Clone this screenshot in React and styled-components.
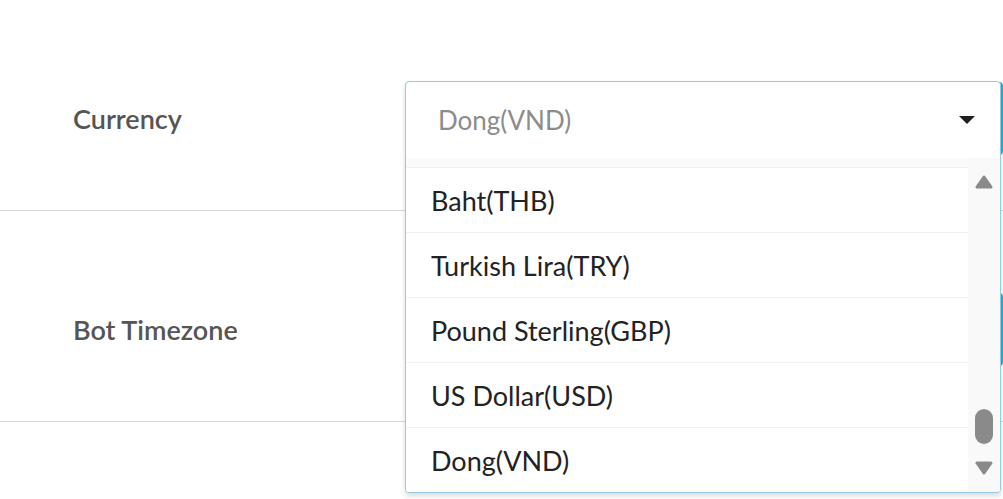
import styled, { createGlobalStyle } from "styled-components";

const GlobalStyle = createGlobalStyle`
  html {
    overflow: hidden;
  }
  body {
    margin: 0;
    padding: 0;
    background: #fff;
    font-family: "Source Sans Pro", Lato, "Open Sans", sans-serif;
  }
`;

const Page = styled.div`
  width: 100%;
  height: 499px;
`;

const Row = styled.div`
  display: grid;
  grid-template-columns: 405px 1fr;
  align-items: center;
  height: 211px;
  box-sizing: border-box;
  padding-top: 27px;
  border-bottom: 1px solid #d6d6d6;
`;

const Label = styled.div`
  padding-left: 73px;
  font-size: 27px;
  font-weight: 600;
  color: #555;
`;

const Field = styled.div`
  position: relative;
  height: 73px;
  border: 2px solid #12b3e3;
  border-radius: 4px;
  box-sizing: border-box;
`;

const Dropdown = styled.div`
  position: absolute;
  z-index: 2;
  top: -3px;
  left: -2px;
  right: 0;
  height: 412px;
  box-sizing: border-box;
  display: flex;
  flex-direction: column;
  background: #fff;
  border: 1px solid #92cadf;
  border-radius: 4px;
  box-shadow: 0 3px 5px rgba(0, 0, 0, 0.14);
  overflow: hidden;
`;

const Header = styled.div`
  flex: none;
  height: 76px;
  display: flex;
  align-items: center;
  justify-content: space-between;
  padding: 0 25px 0 32px;
  font-size: 26px;
  color: #8c8c8c;
`;

const Caret = styled.span`
  width: 0;
  height: 0;
  border-left: 8px solid transparent;
  border-right: 8px solid transparent;
  border-top: 8px solid #1f1f1f;
`;

const Body = styled.div`
  flex: 1;
  min-height: 0;
  display: flex;
`;

const List = styled.div`
  flex: 1;
  display: flex;
  flex-direction: column;
  justify-content: flex-end;
  overflow: hidden;
  background: #fafafa;
`;

const Item = styled.div`
  flex: none;
  height: 64px;
  display: flex;
  align-items: center;
  padding-left: 25px;
  border-top: 1px solid #f1f1f1;
  font-size: 27px;
  color: #222;
  background: #fff;
`;

const Scrollbar = styled.div`
  flex: none;
  width: 32px;
  display: flex;
  flex-direction: column;
  align-items: center;
  padding: 17px 0 17px;
  box-sizing: border-box;
  background: #f9f9f9;
`;

const Spacer = styled.div`
  flex: 1;
`;

const Thumb = styled.div`
  width: 18px;
  height: 35px;
  margin-bottom: 17px;
  border-radius: 9px;
  background: #8a8a8a;
`;

const Arrow = ({ down }) => (
  <svg width="18" height="14" viewBox="0 0 18 14">
    <polygon
      points={down ? "2,2 16,2 9,12" : "2,12 16,12 9,2"}
      fill="#8a8a8a"
      stroke="#8a8a8a"
      strokeWidth="3"
      strokeLinejoin="round"
    />
  </svg>
);

const currencies = [
  "Baht(THB)",
  "Turkish Lira(TRY)",
  "Pound Sterling(GBP)",
  "US Dollar(USD)",
  "Dong(VND)",
];

export default function App() {
  return (
    <Page>
      <GlobalStyle />
      <Row>
        <Label>Currency</Label>
        <Field>
          <Dropdown>
            <Header>
              Dong(VND)
              <Caret />
            </Header>
            <Body>
              <List>
                {currencies.map((c) => (
                  <Item key={c}>{c}</Item>
                ))}
              </List>
              <Scrollbar>
                <Arrow />
                <Spacer />
                <Thumb />
                <Arrow down />
              </Scrollbar>
            </Body>
          </Dropdown>
        </Field>
      </Row>
      <Row>
        <Label>Bot Timezone</Label>
        <Field />
      </Row>
    </Page>
  );
}
